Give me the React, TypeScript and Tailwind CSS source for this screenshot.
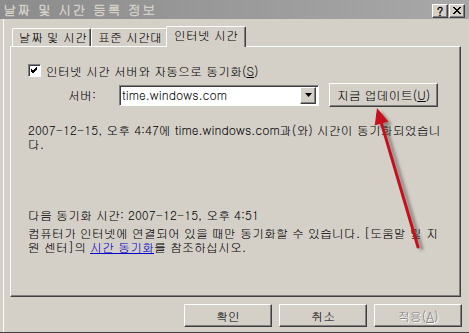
import React from 'react';

const raised = 'border border-t-white border-l-white border-b-[#404040] border-r-[#404040] shadow-[inset_-1px_-1px_#808080]';
const sunken = 'border border-t-[#808080] border-l-[#808080] border-b-white border-r-white shadow-[inset_1px_1px_#404040]';

function Tab({ label, width, active }: { label: string; width: string; active?: boolean }) {
  if (active) {
    return (
      <div className={`${width} relative z-10 -mb-px h-[21px] bg-[#d4d0c8] border-t border-l border-t-white border-l-white border-r border-r-[#404040] shadow-[inset_-1px_0_#808080] rounded-t-[2px] flex items-start justify-center pt-[1px] -ml-[2px] -mr-[1px]`}>
        {label}
      </div>
    );
  }
  return (
    <div className={`${width} h-[18px] bg-[#d4d0c8] border-t border-l border-t-white border-l-white border-r border-r-[#404040] shadow-[inset_-1px_0_#808080] rounded-t-[2px] flex items-start pl-[6px] pt-[1px]`}>
      {label}
    </div>
  );
}

function PushButton({ children, disabled, className = '' }: { children: React.ReactNode; disabled?: boolean; className?: string }) {
  return (
    <div
      className={`${raised} ${className} bg-[#d4d0c8] flex items-center justify-center ${
        disabled ? 'text-[#808080] [text-shadow:1px_1px_#ffffff]' : 'text-black'
      }`}
    >
      {children}
    </div>
  );
}

export default function App() {
  return (
    <div className="relative w-[469px] h-[333px] overflow-hidden bg-[#d4d0c8] border-b border-b-[#404040] font-['Gulim','Noto_Sans_CJK_KR','Liberation_Sans',sans-serif] text-[12px] leading-[14px] text-black">
      {/* title bar */}
      <div className="h-[19px] flex items-center justify-between pl-[3px] pr-[4px] bg-gradient-to-r from-[#8c8c8c] to-[#a8a8a8]">
        <span className="text-[13px] font-bold tracking-[1.5px] text-[#d4d0c8]">날짜 및 시간 등록 정보</span>
        <div className="flex gap-[1px] mt-[2px]">
          <div className={`${raised} w-[16px] h-[14px] bg-[#d4d0c8] flex items-center justify-center text-[12px] font-bold leading-none`}>?</div>
          <div className={`${raised} w-[16px] h-[14px] bg-[#d4d0c8] flex items-center justify-center`}>
            <svg width="8" height="7" viewBox="0 0 8 7">
              <path d="M0 0 L7 7 M1 0 L8 7 M7 0 L0 7 M8 0 L1 7" stroke="black" strokeWidth="1" />
            </svg>
          </div>
        </div>
      </div>

      {/* left window edge highlight */}
      <div className="pl-[10px] pr-[8px] pt-[7px] border-l border-l-white ml-[3px] -mt-0 h-[313px]">
        <div className="-ml-[4px] pl-[2px] flex items-end h-[20px]">
          <Tab label="날짜 및 시간" width="w-[79px]" />
          <Tab label="표준 시간대" width="w-[77px]" />
          <Tab label="인터넷 시간" width="w-[80px]" active />
        </div>

        {/* panel */}
        <div className="-ml-[4px] h-[251px] border border-t-white border-l-white border-b-[#404040] border-r-[#404040] shadow-[inset_-1px_-1px_#808080] pl-[17px] pt-[17px]">
          <div className="flex items-center h-[13px]">
            <div className={`${sunken} w-[13px] h-[13px] bg-white flex items-center justify-center`}>
              <svg width="7" height="7" viewBox="0 0 7 7">
                <path d="M0 2 L2 4 L6 0 M0 3 L2 5 L6 1 M0 4 L2 6 L6 2" stroke="black" strokeWidth="1" fill="none" />
              </svg>
            </div>
            <span className="ml-[5px]">
              인터넷 시간 서버와 자동으로 동기화(<span className="underline">S</span>)
            </span>
          </div>

          <div className="flex items-center h-[24px] mt-[6px]">
            <span className="ml-[40px] w-[51px]">서버:</span>
            <div className={`${sunken} w-[200px] h-[21px] bg-white flex items-center justify-between pl-[2px] pr-[2px]`}>
              <span>time.windows.com</span>
              <div className={`${raised} w-[16px] h-[17px] bg-[#d4d0c8] flex items-center justify-center`}>
                <svg width="7" height="4" viewBox="0 0 7 4">
                  <path d="M0 0 H7 L3.5 4 Z" fill="black" />
                </svg>
              </div>
            </div>
            <PushButton className="ml-[10px] w-[109px] h-[24px]">
              지금 업데이트(<span className="underline">U</span>)
            </PushButton>
          </div>

          <p className="mt-[16px]">
            2007-12-15, 오후 4:47에 time.windows.com과(와) 시간이 동기화되었습니
            <br />
            다.
          </p>

          <p className="mt-[57px]">다음 동기화 시간: 2007-12-15, 오후 4:51</p>
          <p className="mt-[4px]">
            컴퓨터가 인터넷에 연결되어 있을 때만 동기화할 수 있습니다. [도움말 및 지
            <br />
            원 센터]의 <span className="text-[#0000cc] underline">시간 동기화</span>를 참조하십시오.
          </p>
        </div>

        {/* dialog buttons */}
        <div className="-ml-[4px] mt-[7px] flex justify-end gap-[7px] -mr-[1px]">
          <PushButton className="w-[88px] h-[23px]">확인</PushButton>
          <PushButton className="w-[88px] h-[23px]">취소</PushButton>
          <PushButton className="w-[88px] h-[23px]" disabled>
            적용(<span className="underline">A</span>)
          </PushButton>
        </div>
      </div>

      {/* red annotation arrow */}
      <svg className="absolute inset-0 pointer-events-none" width="469" height="333" viewBox="0 0 469 333">
        <defs>
          <filter id="shadow" x="-50%" y="-50%" width="200%" height="200%">
            <feGaussianBlur stdDeviation="1.6" />
          </filter>
        </defs>
        <g filter="url(#shadow)" opacity="0.45" transform="translate(4 3)">
          <line x1="418" y1="247" x2="381.5" y2="123.3" stroke="#303030" strokeWidth="3.5" />
          <polygon points="377,108 387.8,121.5 375.2,125.2" fill="#303030" />
        </g>
        <line x1="418" y1="247" x2="381.5" y2="123.3" stroke="#c8101c" strokeWidth="3" strokeLinecap="round" />
        <polygon points="377,108 388.3,121.5 374.7,125.5" fill="#c8101c" />
      </svg>
    </div>
  );
}
